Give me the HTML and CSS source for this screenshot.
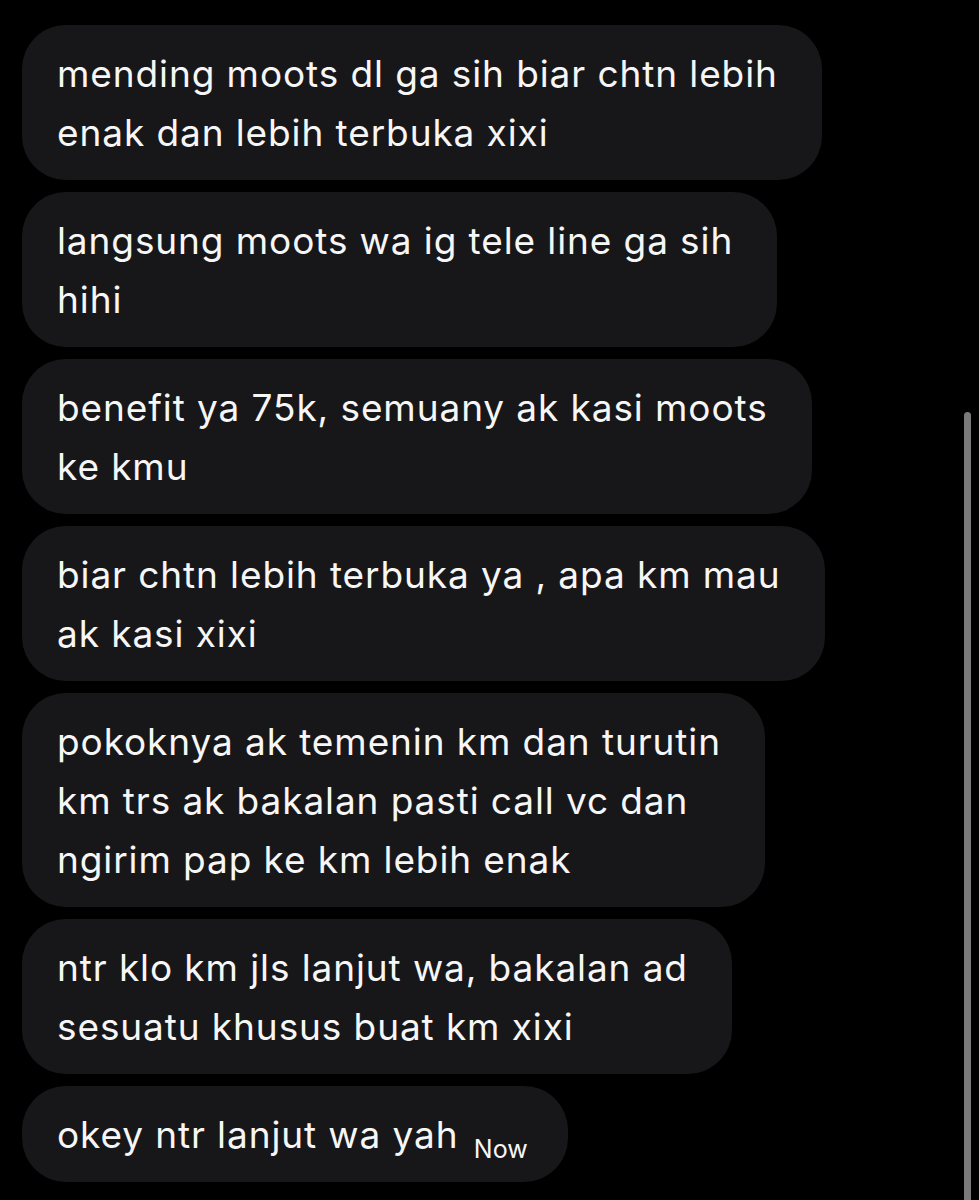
FILE: index.html
```html
<!DOCTYPE html>
<html lang="id">
<head>
<meta charset="utf-8">
<title>DM</title>
<link rel="stylesheet" href="styles.css">
</head>
<body>
<main class="thread">
  <div class="bubble">mending moots dl ga sih biar chtn lebih<br>enak dan lebih terbuka xixi</div>
  <div class="bubble">langsung moots wa ig tele line ga sih<br>hihi</div>
  <div class="bubble">benefit ya 75k, semuany ak kasi moots<br>ke kmu</div>
  <div class="bubble">biar chtn lebih terbuka ya , apa km mau<br>ak kasi xixi</div>
  <div class="bubble">pokoknya ak temenin km dan turutin<br>km trs ak bakalan pasti call vc dan<br>ngirim pap ke km lebih enak</div>
  <div class="bubble">ntr klo km jls lanjut wa, bakalan ad<br>sesuatu khusus buat km xixi</div>
  <div class="bubble bubble-last">okey ntr lanjut wa yah <span class="time">Now</span></div>
</main>
<div class="scrollbar"></div>
</body>
</html>
```
FILE: styles.css
```css
html, body {
  margin: 0;
  padding: 0;
  background: #000;
  height: 1200px;
  overflow: hidden;
}
body {
  position: relative;
  font-family: "Inter", "Liberation Sans", sans-serif;
  color: #f6f6f6;
}
.thread {
  display: flex;
  flex-direction: column;
  align-items: flex-start;
  gap: 12px;
  padding: 25px 0 0 22px;
}
.bubble {
  background: #17171a;
  border-radius: 44px;
  padding: 19px 44px 18px 35px;
  font-size: 37px;
  letter-spacing: 0.9px;
  line-height: 59px;
  white-space: nowrap;
}
.bubble-last {
  padding-right: 40px;
}
.time {
  font-size: 25px;
  line-height: 0;
  letter-spacing: 0;
  position: relative;
  top: 10px;
  margin-left: 4px;
}
.scrollbar {
  position: absolute;
  left: 964px;
  top: 412px;
  width: 7px;
  height: 800px;
  background: #7a7a7a;
  border-radius: 4px;
}
```
